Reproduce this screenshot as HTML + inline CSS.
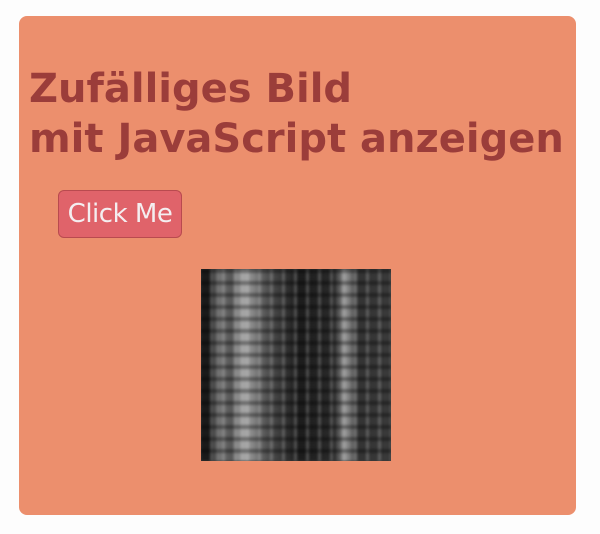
<!DOCTYPE html>
<html><head><style>
body{margin:0;width:600px;height:534px;background:#fdfdfd;position:relative;overflow:hidden;font-family:"DejaVu Sans","Liberation Sans",sans-serif}
.card{position:absolute;left:19px;top:16px;width:557px;height:499px;background:#ec8f6d;border-radius:8px}
h1{position:absolute;left:29px;top:64px;margin:0;font-size:40px;line-height:50px;color:#9b3d3a;font-weight:bold;white-space:nowrap;letter-spacing:0px}
.btn{position:absolute;left:58px;top:190px;background:#e0636a;border:1px solid #b94a4f;border-radius:6px;color:#f4eef0;font-size:26px;line-height:46px;text-align:center;box-sizing:border-box;width:124px;height:48px;letter-spacing:-0.5px}
.img{position:absolute;left:201px;top:269px;width:190px;height:192px;overflow:hidden;background:#3a3a3a}
.img div{position:absolute;inset:0;filter:blur(1.2px)}
.a{background:linear-gradient(90deg,#1a1a1a 0 5%,#777 9%,#555 16%,#aaa 22%,#888 27%,#555 34%,#3a3a3a 42%,#1c1c1c 52%,#2a2a2a 70%,#999 76%,#333 83%,#3a3a3a 100%)}
.b{background:repeating-linear-gradient(0deg,transparent 0 8px,rgba(0,0,0,.35) 8px 12px);}
.c{background:repeating-linear-gradient(90deg,transparent 0 9px,rgba(220,220,220,.25) 9px 12px)}
</style></head><body>
<div class="card"></div>
<h1>Zufälliges Bild<br>mit JavaScript anzeigen</h1>
<div class="btn">Click Me</div>
<div class="img"><div class="a"></div><div class="c"></div><div class="b"></div></div>
</body></html>
